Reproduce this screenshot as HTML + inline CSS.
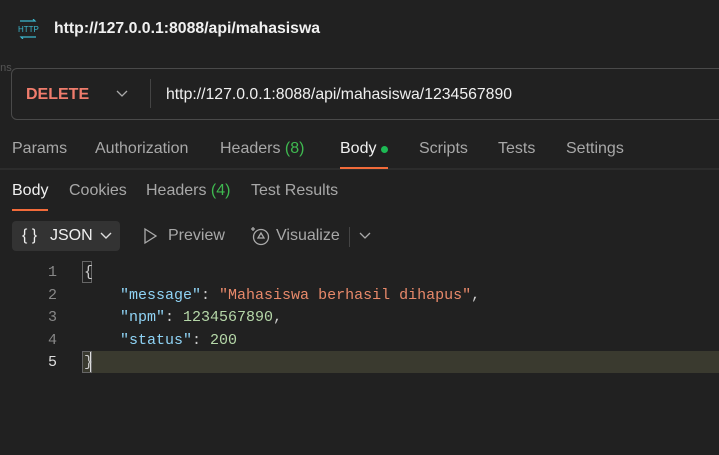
<!DOCTYPE html>
<html><head><style>
body{margin:0;width:719px;height:455px;background:#212121;font-family:"Liberation Sans",sans-serif;color:#d0d0d0;overflow:hidden;position:relative}
.a{position:absolute;white-space:nowrap}
.t{font-size:16px}
.mono{font-family:"Liberation Mono",monospace;font-size:15px}
</style></head><body>
<svg class="a" style="left:17px;top:19px" width="22" height="20" viewBox="0 0 22 20" fill="none" stroke="#3cb9cf" stroke-width="1.2">
<path d="M3 2h15l-2-2M19 18H4l2 2"/><text x="1" y="13" font-size="8" fill="#3cb9cf" stroke="none" font-family="Liberation Sans">HTTP</text></svg>
<div class="a" style="left:54px;top:20px;font-size:15.8px;font-weight:bold;color:#f0f0f0">http://127.0.0.1:8088/api/mahasiswa</div>
<div class="a" style="left:-6px;top:62px;font-size:11px;color:#555">ons</div>
<div class="a" style="left:11px;top:68px;width:720px;height:50px;border:1px solid #4a4a4a;border-radius:6px;background:#212121"></div>
<div class="a" style="left:26px;top:86px;font-size:16px;font-weight:bold;color:#f07c6c">DELETE</div>
<svg class="a" style="left:116px;top:90px" width="12" height="8"><path d="M1 1l5 5 5-5" stroke="#aaa" fill="none" stroke-width="1.3"/></svg>
<div class="a" style="left:150px;top:79px;width:1px;height:29px;background:#444"></div>
<div class="a" style="left:166px;top:86px;font-size:15.8px;color:#f0f0f0">http://127.0.0.1:8088/api/mahasiswa/1234567890</div>
<div class="a t" style="left:12px;top:140px;color:#a8a8a8">Params</div>
<div class="a t" style="left:95px;top:140px;color:#a8a8a8">Authorization</div>
<div class="a t" style="left:220px;top:140px;color:#a8a8a8">Headers <span style="color:#3fb950">(8)</span></div>
<div class="a t" style="left:340px;top:140px;color:#f0f0f0">Body</div>
<div class="a" style="left:381px;top:146px;width:7px;height:7px;border-radius:50%;background:#1db954"></div>
<div class="a t" style="left:419px;top:140px;color:#a8a8a8">Scripts</div>
<div class="a t" style="left:498px;top:140px;color:#a8a8a8">Tests</div>
<div class="a t" style="left:566px;top:140px;color:#a8a8a8">Settings</div>
<div class="a" style="left:0;top:168px;width:719px;height:2px;background:#2c2c2c"></div>
<div class="a" style="left:340px;top:167px;width:48px;height:2px;background:#f26b3a"></div>
<div class="a t" style="left:12px;top:182px;color:#f0f0f0">Body</div>
<div class="a" style="left:12px;top:209px;width:36px;height:2px;background:#f26b3a"></div>
<div class="a t" style="left:69px;top:182px;color:#a8a8a8">Cookies</div>
<div class="a t" style="left:146px;top:182px;color:#a8a8a8">Headers <span style="color:#3fb950">(4)</span></div>
<div class="a t" style="left:251px;top:182px;color:#a8a8a8">Test Results</div>
<div class="a" style="left:12px;top:221px;width:108px;height:30px;border-radius:4px;background:#333"></div>
<div class="a" style="left:22px;top:227px;font-size:16px;color:#f0f0f0">{ }</div>
<div class="a" style="left:50px;top:227px;font-size:16px;color:#f0f0f0">JSON</div>
<svg class="a" style="left:100px;top:232px" width="12" height="8"><path d="M1 1l5 5 5-5" stroke="#ddd" fill="none" stroke-width="1.4"/></svg>
<svg class="a" style="left:143px;top:227px" width="14" height="18"><path d="M2 2l11 7-11 7z" stroke="#aaa" fill="none" stroke-width="1.3"/></svg>
<div class="a t" style="left:168px;top:227px;color:#a8a8a8">Preview</div>
<svg class="a" style="left:249px;top:225px" width="22" height="22" fill="none" stroke="#aaa" stroke-width="1.3"><circle cx="12" cy="12" r="7.5"/><path d="M12 8l-3 5h6z"/><path d="M4 2v4M2 4h4"/></svg>
<div class="a t" style="left:276px;top:227px;color:#a8a8a8">Visualize</div>
<div class="a" style="left:349px;top:227px;width:1px;height:20px;background:#444"></div>
<svg class="a" style="left:359px;top:232px" width="12" height="8"><path d="M1 1l5 5 5-5" stroke="#aaa" fill="none" stroke-width="1.3"/></svg>
<div class="a" style="left:83px;top:351px;width:636px;height:22px;background:#3a3a2f"></div>
<div class="a" style="left:90px;top:351px;width:2px;height:22px;background:#ddd"></div>
<div class="a" style="left:82px;top:261px;width:8px;height:20px;border:1px solid #666"></div>
<div class="a" style="left:82px;top:351px;width:8px;height:20px;border:1px solid #666"></div>
<div class="a mono" style="left:48px;top:262px;line-height:22.6px;color:#888">1<br>2<br>3<br>4<br><span style="color:#ddd">5</span></div>
<div class="a mono" style="left:84px;top:262px;line-height:22.6px;color:#ccc">{<br>&nbsp;&nbsp;&nbsp;&nbsp;<span style="color:#8fd3f5">"message"</span>: <span style="color:#e8896a">"Mahasiswa berhasil dihapus"</span>,<br>&nbsp;&nbsp;&nbsp;&nbsp;<span style="color:#8fd3f5">"npm"</span>: <span style="color:#b5d7a8">1234567890</span>,<br>&nbsp;&nbsp;&nbsp;&nbsp;<span style="color:#8fd3f5">"status"</span>: <span style="color:#b5d7a8">200</span><br>}</div>
</body></html>
